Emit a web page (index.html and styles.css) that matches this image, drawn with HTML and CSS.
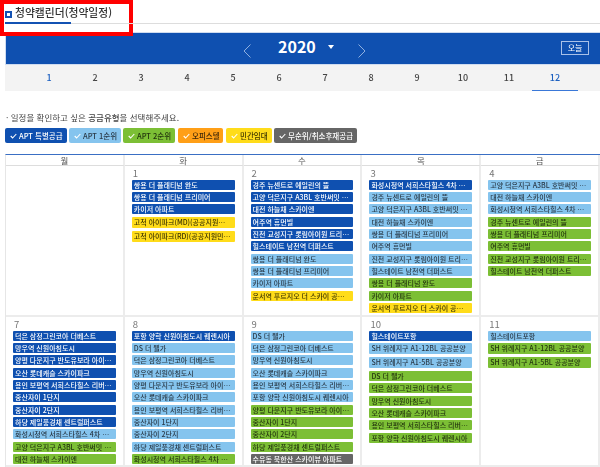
FILE: index.html
```html
<!DOCTYPE html>
<html lang="ko">
<head>
<meta charset="utf-8">
<title>청약캘린더</title>
<link rel="stylesheet" href="styles.css">
</head>
<body>
<div class="page">
  <div class="highlight"></div>
  <div class="title-bar">
    <span class="title-mark"></span>
    <h1 class="title">청약캘린더(청약일정)</h1>
  </div>
  <div class="year-bar">
    <svg class="chev" width="8" height="14" viewBox="0 0 8 14"><path d="M7.5 .5 1 7l6.5 6.5" fill="none" stroke="#8fb0e0"/></svg>
    <span class="year">2020</span>
    <span class="caret"></span>
    <svg class="chev chev-next" width="8" height="14" viewBox="0 0 8 14"><path d="M.5 .5 7 7 .5 13.5" fill="none" stroke="#8fb0e0"/></svg>
    <span class="today">오늘</span>
  </div>
  <div class="months">
    <span class="month blue">1</span><span class="month">2</span><span class="month">3</span><span class="month">4</span><span class="month">5</span><span class="month">6</span><span class="month">7</span><span class="month">8</span><span class="month">9</span><span class="month">10</span><span class="month">11</span><span class="month blue active">12</span>
  </div>
  <p class="guide">· 일정을 확인하고 싶은 <b>공급유형</b>을 선택해주세요.</p>
  <div class="legend">
    <span class="tag w62 c-blue"><svg class="check" width="7" height="6" viewBox="0 0 7 6"><path d="M.7 3 2.6 5 6.3 1" fill="none" stroke="currentColor" stroke-width="1.1"/></svg>APT 특별공급</span>
    <span class="tag w52 c-sky"><svg class="check light" width="7" height="6" viewBox="0 0 7 6"><path d="M.7 3 2.6 5 6.3 1" fill="none" stroke="currentColor" stroke-width="1.1"/></svg>APT 1순위</span>
    <span class="tag w52 c-green"><svg class="check light" width="7" height="6" viewBox="0 0 7 6"><path d="M.7 3 2.6 5 6.3 1" fill="none" stroke="currentColor" stroke-width="1.1"/></svg>APT 2순위</span>
    <span class="tag w45 c-orange"><svg class="check light" width="7" height="6" viewBox="0 0 7 6"><path d="M.7 3 2.6 5 6.3 1" fill="none" stroke="currentColor" stroke-width="1.1"/></svg>오피스텔</span>
    <span class="tag w46 c-yellow"><svg class="check light" width="7" height="6" viewBox="0 0 7 6"><path d="M.7 3 2.6 5 6.3 1" fill="none" stroke="currentColor" stroke-width="1.1"/></svg>민간임대</span>
    <span class="tag w83 c-gray"><svg class="check" width="7" height="6" viewBox="0 0 7 6"><path d="M.7 3 2.6 5 6.3 1" fill="none" stroke="currentColor" stroke-width="1.1"/></svg>무순위/취소후재공급</span>
  </div>
  <div class="calendar">
    <div class="head">월</div><div class="head">화</div><div class="head">수</div><div class="head">목</div><div class="head">금</div>

    <div class="cell"></div>
    <div class="cell"><div class="num">1</div>
      <div class="ev c-blue">쌍용 더 플래티넘 완도</div>
      <div class="ev c-blue">쌍용 더 플래티넘 프리미어</div>
      <div class="ev c-blue">카이저 아파트</div>
      <div class="ev tall c-yellow">고척 아이파크(MD)(공공지원민간임대)</div>
      <div class="ev tall c-yellow">고척 아이파크(RD)(공공지원민간임대)</div>
    </div>
    <div class="cell"><div class="num">2</div>
      <div class="ev c-blue">경주 뉴센트로 에일린의 뜰</div>
      <div class="ev c-blue">고양 덕은지구 A3BL 호반써밋 에이스파크</div>
      <div class="ev c-blue">대전 하늘채 스카이엔</div>
      <div class="ev c-blue">여주역 휴먼빌</div>
      <div class="ev c-blue">진천 교성지구 롯림아이원 트리니티</div>
      <div class="ev c-blue">힐스테이트 남천역 더퍼스트</div>
      <div class="ev c-sky">쌍용 더 플래티넘 완도</div>
      <div class="ev c-sky">쌍용 더 플래티넘 프리미어</div>
      <div class="ev c-sky">카이저 아파트</div>
      <div class="ev c-yellow">운서역 푸르지오 더 스카이 공공지원민간임대</div>
    </div>
    <div class="cell"><div class="num">3</div>
      <div class="ev c-blue">화성시청역 서희스타힐스 4차 더 파크</div>
      <div class="ev c-sky">경주 뉴센트로 에일린의 뜰</div>
      <div class="ev c-sky">고양 덕은지구 A3BL 호반써밋 에이스파크</div>
      <div class="ev c-sky">대전 하늘채 스카이엔</div>
      <div class="ev c-sky">쌍용 더 플래티넘 프리미어</div>
      <div class="ev c-sky">여주역 휴먼빌</div>
      <div class="ev c-sky">진천 교성지구 롯림아이원 트리니티</div>
      <div class="ev c-sky">힐스테이트 남천역 더퍼스트</div>
      <div class="ev c-green">쌍용 더 플래티넘 완도</div>
      <div class="ev c-green">카이저 아파트</div>
      <div class="ev c-yellow">운서역 푸르지오 더 스카이 공공지원민간임대</div>
    </div>
    <div class="cell"><div class="num">4</div>
      <div class="ev c-sky">고양 덕은지구 A3BL 호반써밋 에이스파크</div>
      <div class="ev c-sky">대전 하늘채 스카이엔</div>
      <div class="ev c-sky">화성시청역 서희스타힐스 4차 더 파크</div>
      <div class="ev c-green">경주 뉴센트로 에일린의 뜰</div>
      <div class="ev c-green">쌍용 더 플래티넘 프리미어</div>
      <div class="ev c-green">여주역 휴먼빌</div>
      <div class="ev c-green">진천 교성지구 롯림아이원 트리니티</div>
      <div class="ev c-green">힐스테이트 남천역 더퍼스트</div>
    </div>

    <div class="cell"><div class="num">7</div>
      <div class="ev c-blue">덕은 삼정그린코아 더베스트</div>
      <div class="ev c-blue">망우역 신원아침도시</div>
      <div class="ev c-blue">양평 다문지구 반도유보라 아이비파크</div>
      <div class="ev c-blue">오산 롯데캐슬 스카이파크</div>
      <div class="ev c-blue">용인 보평역 서희스타힐스 리버파크</div>
      <div class="ev c-blue">중산자이 1단지</div>
      <div class="ev c-blue">중산자이 2단지</div>
      <div class="ev c-blue">하당 제일풍경채 센트럴퍼스트</div>
      <div class="ev c-sky">화성시청역 서희스타힐스 4차 더 파크</div>
      <div class="ev c-green">고양 덕은지구 A3BL 호반써밋 에이스파크</div>
      <div class="ev c-green">대전 하늘채 스카이엔</div>
    </div>
    <div class="cell"><div class="num">8</div>
      <div class="ev c-blue">포항 양학 신원아침도시 퀘렌시아</div>
      <div class="ev c-sky">DS 더 웰가</div>
      <div class="ev c-sky">덕은 삼정그린코아 더베스트</div>
      <div class="ev c-sky">망우역 신원아침도시</div>
      <div class="ev c-sky">양평 다문지구 반도유보라 아이비파크</div>
      <div class="ev c-sky">오산 롯데캐슬 스카이파크</div>
      <div class="ev c-sky">용인 보평역 서희스타힐스 리버파크</div>
      <div class="ev c-sky">중산자이 1단지</div>
      <div class="ev c-sky">중산자이 2단지</div>
      <div class="ev c-sky">하당 제일풍경채 센트럴퍼스트</div>
      <div class="ev c-green">화성시청역 서희스타힐스 4차 더 파크</div>
    </div>
    <div class="cell"><div class="num">9</div>
      <div class="ev c-sky">DS 더 웰가</div>
      <div class="ev c-sky">덕은 삼정그린코아 더베스트</div>
      <div class="ev c-sky">망우역 신원아침도시</div>
      <div class="ev c-sky">오산 롯데캐슬 스카이파크</div>
      <div class="ev c-sky">용인 보평역 서희스타힐스 리버파크</div>
      <div class="ev c-sky">포항 양학 신원아침도시 퀘렌시아</div>
      <div class="ev c-green">양평 다문지구 반도유보라 아이비파크</div>
      <div class="ev c-green">중산자이 1단지</div>
      <div class="ev c-green">중산자이 2단지</div>
      <div class="ev c-green">하당 제일풍경채 센트럴퍼스트</div>
      <div class="ev c-gray">수유동 북한산 스카이뷰 아파트</div>
    </div>
    <div class="cell"><div class="num">10</div>
      <div class="ev c-blue">힐스테이트포항</div>
      <div class="ev tall c-sky">SH 위례지구 A1-12BL 공공분양</div>
      <div class="ev tall c-sky">SH 위례지구 A1-5BL 공공분양</div>
      <div class="ev c-green">DS 더 웰가</div>
      <div class="ev c-green">덕은 삼정그린코아 더베스트</div>
      <div class="ev c-green">망우역 신원아침도시</div>
      <div class="ev c-green">오산 롯데캐슬 스카이파크</div>
      <div class="ev c-green">용인 보평역 서희스타힐스 리버파크</div>
      <div class="ev c-green">포항 양학 신원아침도시 퀘렌시아</div>
    </div>
    <div class="cell"><div class="num">11</div>
      <div class="ev c-sky">힐스테이트포항</div>
      <div class="ev tall c-green">SH 위례지구 A1-12BL 공공분양</div>
      <div class="ev tall c-green">SH 위례지구 A1-5BL 공공분양</div>
    </div>
  </div>
</div>
</body>
</html>
```
FILE: styles.css
```css
* { box-sizing: border-box; }
html, body { margin: 0; padding: 0; background: #fff; }
body { font-family: "Noto Sans CJK KR", "Noto Sans", sans-serif; color: #333; overflow: hidden; }
.page { position: relative; width: 600px; height: 467px; overflow: hidden; padding-left: 5px; filter: blur(.3px); }

.highlight { position: absolute; left: 0; top: 0; width: 133px; height: 36px; border: 4.5px solid #f00; pointer-events: none; }

.title-bar { display: flex; align-items: flex-start; gap: 3px; height: 24px; padding-top: 5px; border-bottom: 1px solid #ddd; position: relative; }
.title-bar::after { content: ""; position: absolute; left: 0; bottom: -1px; width: 66px; height: 2px; background: #1352b3; }
.title-mark { width: 7px; height: 7px; margin-top: 6px; border: 2px solid #1352b3; flex: none; }
.title { margin: 0; font-size: 10.8px; line-height: 14px; font-weight: 500; color: #333; }

.year-bar { display: flex; align-items: center; height: 33px; margin-top: 8px; padding: 0 11px 0 237px; background: #0f50b0; border: 1px solid #cfdcf0; border-right: 0; color: #fff; }
.chev { flex: none; margin-top: 4px; }
.year { margin-left: 27px; margin-bottom: 6px; font-size: 16px; font-weight: 700; line-height: 24px; }
.caret { margin-left: 12px; margin-bottom: 3px; width: 0; height: 0; border: 3px solid transparent; border-top: 4px solid #fff; border-bottom: 0; }
.chev-next { margin-left: 24px; }
.today { margin-left: auto; margin-bottom: 2px; width: 28px; height: 14px; border: 1px solid #a9c1e8; font-size: 8px; line-height: 12px; text-align: center; }

.months { display: flex; height: 26px; padding-left: 21px; background: #f3f3f3; }
.month { width: 46px; font-size: 9px; font-weight: 500; line-height: 26px; text-align: center; color: #444; }
.month.blue { color: #1b5fc0; }
.month.active { border-bottom: 1px solid #3a78d8; }

.guide { margin: 20px 0 0 1px; height: 12px; font-size: 8.5px; line-height: 12px; color: #444; }
.guide b { font-weight: 500; }

.legend { display: flex; gap: 2px; height: 15px; margin-top: 5px; }
.tag { display: flex; align-items: center; gap: 2px; height: 15px; border-radius: 2px; padding-left: 5px; font-size: 7.5px; font-weight: 500; line-height: 15px; white-space: nowrap; overflow: hidden; }
.check { flex: none; }
.check.light { color: #fff; }
.w62 { width: 62px; } .w52 { width: 52px; } .w45 { width: 45px; margin-left: 1px; } .w46 { width: 46px; margin-left: 1px; } .w83 { width: 83px; }

.c-blue { background: #0f50b0; color: #fff; }
.c-sky { background: #85c4ee; color: #2a3a48; }
.c-green { background: #7cbf35; color: #24370e; }
.c-orange { background: #ff9f17; color: #40290a; }
.c-yellow { background: #ffdc1a; color: #3d3500; }
.c-gray { background: #666; color: #fff; }

.calendar { display: grid; grid-template-columns: repeat(5, 118.8px); grid-template-rows: 11px 151px 150px; margin-top: 11px; border-top: 1px solid #3a6fc4; border-left: 1px solid #e6e6e6; }
.head { font-size: 8.5px; line-height: 10px; text-align: center; color: #555; border-right: 2px solid #ececec; border-bottom: 1px solid #ddd; }
.cell { padding: 1px 7px 0 7px; border-right: 2px solid #ececec; border-bottom: 2px solid #ececec; overflow: hidden; }
.num { height: 12.5px; padding-left: 1px; font-size: 9.5px; line-height: 13px; color: #777; }
.ev { height: 10px; margin-bottom: 2.35px; padding: 0 3px 0 2px; border-radius: 1px; font-size: 7px; font-weight: 500; line-height: 10px; white-space: nowrap; overflow: hidden; text-overflow: ellipsis; }
.ev.tall { height: 11px; margin-bottom: 3px; }
```
